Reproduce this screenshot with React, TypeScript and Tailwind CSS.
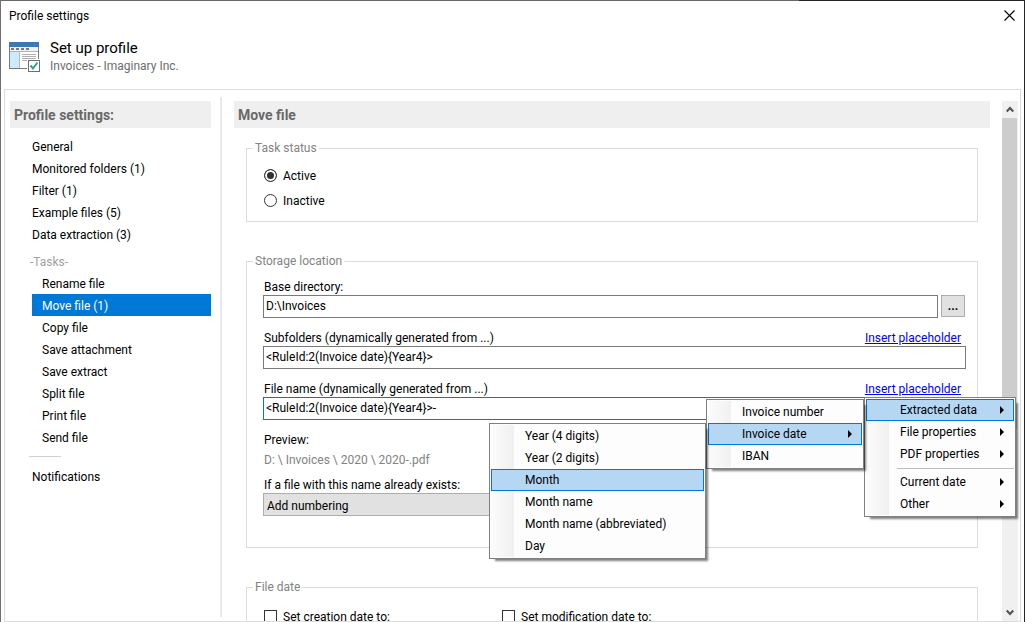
import React, { useState } from "react";
import { clsx } from "clsx";

type MenuEntry = {
  label: string;
  active?: boolean;
  arrow?: boolean;
  separator?: boolean;
  children?: MenuEntry[];
  width?: string;
};

const generalItems = [
  "General",
  "Monitored folders (1)",
  "Filter (1)",
  "Example files (5)",
  "Data extraction (3)",
];

const taskItems = [
  "Rename file",
  "Move file (1)",
  "Copy file",
  "Save attachment",
  "Save extract",
  "Split file",
  "Print file",
  "Send file",
];

const placeholderMenu: MenuEntry[] = [
  {
    label: "Extracted data",
    active: true,
    arrow: true,
    width: "w-[158px]",
    children: [
      { label: "Invoice number" },
      {
        label: "Invoice date",
        active: true,
        arrow: true,
        width: "w-[217px]",
        children: [
          { label: "Year (4 digits)" },
          { label: "Year (2 digits)" },
          { label: "Month", active: true },
          { label: "Month name" },
          { label: "Month name (abbreviated)" },
          { label: "Day" },
        ],
      },
      { label: "IBAN" },
    ],
  },
  { label: "File properties", arrow: true },
  { label: "PDF properties", arrow: true },
  { label: "Current date", arrow: true, separator: true },
  { label: "Other", arrow: true },
];

const Menu: React.FC<{ items: MenuEntry[]; className?: string }> = ({ items, className }) => (
  <ul
    className={clsx(
      "absolute border border-[#808080] bg-[#fdfdfd] p-px shadow-[4px_4px_2px_-2px_rgba(0,0,0,0.5)]",
      className
    )}
  >
    <li aria-hidden="true" className="absolute inset-y-px left-px w-[23px] bg-linear-to-r from-[#fcfcfc] to-[#f0f0f0]" />
    {items.map((item) => (
      <li key={item.label} className="relative">
        {item.separator && <hr className="mt-[3px] mb-[2px] ml-[31px] border-[#bdbdbd]" />}
        <button
          type="button"
          className={clsx(
            "relative flex h-[22px] w-full items-center justify-between border pr-[9px] pl-[33px] text-left whitespace-nowrap",
            item.active ? "border-[#0078d7] bg-[#b5d7f3]" : "border-transparent"
          )}
        >
          {item.label}
          {item.arrow && (
            <svg viewBox="0 0 4 8" className="h-2 w-1" aria-hidden="true">
              <path d="M0 0L4 4L0 8Z" fill="#000" />
            </svg>
          )}
        </button>
        {item.children && (
          <Menu items={item.children} className={clsx("top-0 right-full mr-[2px]", item.width)} />
        )}
      </li>
    ))}
  </ul>
);

const ProfileIcon = () => (
  <svg viewBox="0 0 32 30" className="h-[30px] w-8" shapeRendering="crispEdges" aria-hidden="true">
    <rect x="0" y="0" width="30" height="27" fill="#7a7a7a" />
    <rect x="1" y="5" width="28" height="21" fill="#fff" />
    <rect x="0" y="0" width="30" height="5" fill="#3c78b4" />
    <rect x="1" y="5" width="28" height="4" fill="#f0f0f0" />
    <path d="M2 6h3v2h-3zM7 6h3v2h-3zM12 6h3v2h-3zM17 6h3v2h-3z" fill="#7a7a7a" />
    <rect x="1" y="9" width="28" height="1" fill="#b4b4b4" />
    <rect x="1" y="10" width="9" height="16" fill="#cdeaff" />
    <rect x="10" y="10" width="1" height="16" fill="#b8b8b8" />
    <path d="M13 12h14v1h-14zM13 14h14v1h-14zM13 16h14v1h-14zM13 18h10v1h-10z" fill="#b0b0b0" />
    <rect x="18" y="17" width="14" height="13" fill="#fff" />
    <rect x="19.5" y="18.5" width="11" height="11" fill="#fff" stroke="#6f6f6f" />
    <path d="M21.5 23.5L24 26.5L28.5 20.5" fill="none" stroke="#33a578" strokeWidth="2" shapeRendering="auto" />
  </svg>
);

const Chevron = ({ down = false }: { down?: boolean }) => (
  <svg viewBox="0 0 8 7" className={clsx("h-[7px] w-2", down && "rotate-180")} aria-hidden="true">
    <path d="M0.7 5.5L4 2L7.3 5.5" fill="none" stroke="#505050" strokeWidth="2" />
  </svg>
);

const SectionTitle = ({ children }: { children: React.ReactNode }) => (
  <h2 className="h-[27px] bg-[#efefef] pl-1 text-[14px] leading-[28px] font-bold text-[#696969]">{children}</h2>
);

const Group: React.FC<{ title: string; className?: string; children: React.ReactNode }> = ({
  title,
  className,
  children,
}) => (
  <fieldset className={clsx("border border-[#dcdcdc] pl-4", className)}>
    <legend className="-ml-[10px] h-[17px] px-[2px] leading-[17px] text-[#838383]">{title}</legend>
    {children}
  </fieldset>
);

const NavItem = ({ label, selected, indent }: { label: string; selected?: boolean; indent?: boolean }) => (
  <li className="ml-[22px]">
    <a
      href="#"
      className={clsx(
        "block h-[22px]",
        indent ? "pl-[10px] leading-6" : "leading-[22px]",
        selected && "bg-[#0078d7] text-white"
      )}
    >
      {label}
    </a>
  </li>
);

const inputStyle = "h-[23px] w-full min-w-0 border bg-white px-[2px] pb-px outline-none";
const checkStyle = "h-[13px] w-[13px] appearance-none border border-[#333] bg-white checked:bg-[#333]";

const App: React.FC = () => {
  const [status, setStatus] = useState("Active");
  const [baseDir, setBaseDir] = useState("D:\\Invoices");
  const [subfolders, setSubfolders] = useState("<RuleId:2(Invoice date){Year4}>");
  const [fileName, setFileName] = useState("<RuleId:2(Invoice date){Year4}>-");

  return (
    <div className="relative flex h-screen flex-col overflow-hidden border-r border-l border-r-[#262626] border-l-[#707070] bg-white font-['Roboto','Open_Sans',sans-serif] text-[12px] leading-4 text-black">
      <div className="h-px shrink-0 bg-linear-to-r from-[#6b6768] from-78% to-[#262223] to-78%" />
      <header className="h-[88px] shrink-0">
        <div className="flex h-7 items-center justify-between pr-[9px] pl-2">
          <span className="pt-[2px]">Profile settings</span>
          <button type="button" aria-label="Close">
            <svg viewBox="0 0 11 11" className="h-[11px] w-[11px]" aria-hidden="true">
              <path d="M0.5 0.5L10.5 10.5M10.5 0.5L0.5 10.5" stroke="#000" strokeWidth="1.1" />
            </svg>
          </button>
        </div>
        <div className="flex gap-[9px] pl-2">
          <div className="pt-[13px]">
            <ProfileIcon />
          </div>
          <div className="pt-[9px]">
            <h1 className="text-[15px] leading-5">Set up profile</h1>
            <p className="text-[#6d6d6d]">Invoices - Imaginary Inc.</p>
          </div>
        </div>
      </header>

      <div className="mr-[3px] ml-[3px] flex min-h-0 flex-1 border border-[#dcdcdc]">
        <nav className="w-[206px] shrink-0 pt-[11px] pl-[5px]">
          <SectionTitle>Profile settings:</SectionTitle>
          <ul className="pt-2">
            {generalItems.map((label) => (
              <NavItem key={label} label={label} />
            ))}
          </ul>
          <div className="mt-1 ml-5 h-[22px] leading-6 text-[#a0a0a0]">-Tasks-</div>
          <ul>
            {taskItems.map((label) => (
              <NavItem key={label} label={label} indent selected={label === "Move file (1)"} />
            ))}
          </ul>
          <hr className="mt-2 mb-[9px] ml-[19px] w-8 border-[#d0d0d0]" />
          <ul>
            <NavItem label="Notifications" />
          </ul>
        </nav>
        <div className="mt-[7px] mr-3 mb-1 ml-[9px] w-[2px] shrink-0 bg-[#e9e9e9]" />

        <main className="mt-[11px] min-w-0 flex-1 overflow-hidden">
          <SectionTitle>Move file</SectionTitle>
          <div className="mr-3 ml-3 pt-3">
            <Group title="Task status" className="h-[82px]">
              {["Active", "Inactive"].map((option) => (
                <label key={option} className="ml-px flex h-[25px] w-fit items-center gap-[6px] first-of-type:mt-[6px]">
                  <input
                    type="radio"
                    name="status"
                    checked={status === option}
                    onChange={() => setStatus(option)}
                    className="h-[13px] w-[13px] appearance-none rounded-full border border-[#333] bg-white checked:bg-[#333] checked:shadow-[inset_0_0_0_2px_#fff]"
                  />
                  <span className="pt-px">{option}</span>
                </label>
              ))}
            </Group>

            <Group title="Storage location" className="mt-[31px] pt-[9px] pr-[11px] pb-[31px]">
              <label htmlFor="base" className="ml-px block">
                Base directory:
              </label>
              <div className="mr-px flex items-start gap-[3px]">
                <input
                  id="base"
                  value={baseDir}
                  onChange={(e) => setBaseDir(e.target.value)}
                  className={clsx(inputStyle, "border-[#7a7a7a]")}
                />
                <button
                  type="button"
                  className="h-[22px] w-6 shrink-0 border border-[#adadad] bg-[#e1e1e1] leading-5 font-bold"
                >
                  ...
                </button>
              </div>

              <div className="mt-3 mr-[5px] ml-px flex justify-between">
                <label htmlFor="subfolders">Subfolders (dynamically generated from ...)</label>
                <a href="#" className="text-[#0000ff] underline">
                  Insert placeholder
                </a>
              </div>
              <input
                id="subfolders"
                value={subfolders}
                onChange={(e) => setSubfolders(e.target.value)}
                className={clsx(inputStyle, "block border-[#7a7a7a]")}
              />

              <div className="mt-3 mr-[5px] ml-px flex justify-between">
                <label htmlFor="filename">File name (dynamically generated from ...)</label>
                <a href="#" className="text-[#0000ff] underline">
                  Insert placeholder
                </a>
              </div>
              <input
                id="filename"
                value={fileName}
                onChange={(e) => setFileName(e.target.value)}
                className={clsx(inputStyle, "block border-[#0078d7]")}
              />

              <p className="mt-3 ml-px">Preview:</p>
              <p className="mt-1 ml-px text-[#838383]">D: \ Invoices \ 2020 \ 2020-.pdf</p>
              <label htmlFor="exists" className="mt-[9px] ml-px block">
                If a file with this name already exists:
              </label>
              <select
                id="exists"
                className="block h-[23px] w-[436px] appearance-none border border-[#adadad] bg-[#e1e1e1] px-[3px] pt-[2px]"
              >
                <option>Add numbering</option>
              </select>
            </Group>

            <Group title="File date" className="mt-[31px] pt-3 pb-6">
              <div className="ml-px flex">
                <label className="flex w-[238px] items-center gap-[6px]">
                  <input type="checkbox" className={checkStyle} />
                  <span className="pt-px">Set creation date to:</span>
                </label>
                <label className="flex items-center gap-[6px]">
                  <input type="checkbox" className={checkStyle} />
                  <span className="pt-px">Set modification date to:</span>
                </label>
              </div>
            </Group>
          </div>
        </main>

        {/* scrollbar */}
        <div className="mt-[11px] mr-[2px] ml-3 flex w-4 shrink-0 flex-col bg-[#f0f0f0]">
          <button type="button" aria-label="Scroll up" className="flex h-[17px] shrink-0 items-center justify-center">
            <Chevron />
          </button>
          <div className="min-h-0 flex-1">
            <div className="mr-px h-[64%] bg-[#cdcdcd]" />
          </div>
          <button type="button" aria-label="Scroll down" className="flex h-[17px] shrink-0 items-center justify-center">
            <Chevron down />
          </button>
        </div>
      </div>

      <Menu items={placeholderMenu} className="top-[397px] right-2 w-[152px]" />
    </div>
  );
};

export default App;
